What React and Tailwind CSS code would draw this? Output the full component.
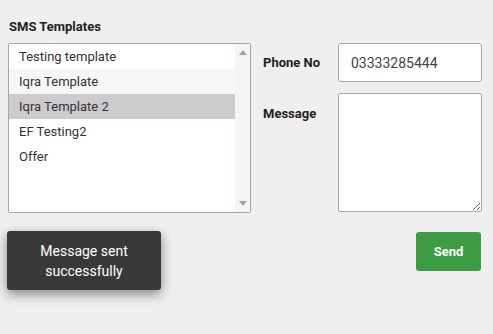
import React from 'react';

const templates = ['Testing template', 'Iqra Template', 'Iqra Template 2', 'EF Testing2', 'Offer'];

export default function App() {
  const selected = 2;
  const hovered = 1;

  return (
    <main className="w-[493px] h-[334px] bg-[#efefef] font-['Roboto',sans-serif] text-[#222] relative overflow-hidden">
      <div className="pt-[18px] pl-[9px] pr-[11px] flex gap-[12px]">
        <div className="w-[243px]">
          <h2 className="text-[13px] font-bold text-[#222] leading-[18px] mb-[7px]">SMS Templates</h2>
          <div className="h-[170px] border border-[#a6a6a6] rounded-[2px] bg-white flex -ml-[1px]">
            <ul className="flex-1">
              {templates.map((t, i) => (
                <li
                  key={t}
                  className={
                    'h-[25px] pl-[10px] flex items-center text-[13px] text-[#333] ' +
                    (i === selected ? 'bg-[#cdcbcd]' : i === hovered ? 'bg-[#f7f7f7]' : '')
                  }
                >
                  {t}
                </li>
              ))}
            </ul>
            <div className="w-[15px] bg-[#f6f4f6] flex flex-col justify-between items-center py-[6px]">
              <svg width="8" height="5" viewBox="0 0 8 5"><path d="M0 5 L4 0 L8 5 Z" fill="#a3a3a3" /></svg>
              <svg width="8" height="5" viewBox="0 0 8 5"><path d="M0 0 L4 5 L8 0 Z" fill="#a3a3a3" /></svg>
            </div>
          </div>
        </div>

        <div className="flex-1 pt-[25px]">
          <div className="flex items-center h-[39px]">
            <label className="w-[75px] text-[13px] font-bold text-[#222]">Phone No</label>
            <input
              defaultValue="03333285444"
              className="w-[144px] h-[39px] border border-[#a9a9a9] rounded-[3px] bg-white px-[12px] text-[14px] text-[#444] outline-none"
            />
          </div>
          <div className="flex items-start mt-[11px]">
            <label className="w-[75px] text-[13px] font-bold text-[#222] pt-[11px]">Message</label>
            <textarea className="w-[144px] h-[119px] border border-[#a9a9a9] rounded-[2px] bg-white outline-none" />
          </div>
        </div>
      </div>

      <div className="flex justify-end pr-[12px] mt-[19px]">
        <button className="w-[65px] h-[39px] rounded-[3px] bg-[#3d9c41] text-white text-[13px] font-bold">Send</button>
      </div>

      <div className="absolute left-[7px] top-[231px] w-[154px] h-[59px] rounded-[3px] bg-[#383838] shadow-[0_4px_12px_rgba(0,0,0,0.45)] flex items-center justify-center text-center text-white text-[14px] leading-[20px]">
        Message sent
        <br />
        successfully
      </div>
    </main>
  );
}
